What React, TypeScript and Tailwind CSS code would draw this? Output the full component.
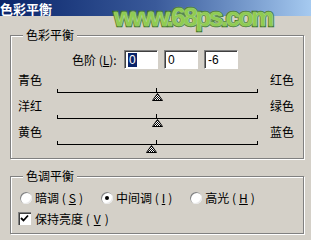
import React from "react";

const CJK = "font-['Noto_Sans_CJK_SC','Noto_Sans',sans-serif]";

// slider thumb: hatched triangle
function Thumb() {
  return (
    <svg width="11" height="8" viewBox="0 0 11 8">
      <defs>
        <pattern id="hatch" width="2" height="2" patternUnits="userSpaceOnUse">
          <rect width="2" height="2" fill="#ffffff" />
          <rect width="1" height="1" fill="#000000" />
          <rect x="1" y="1" width="1" height="1" fill="#000000" />
        </pattern>
      </defs>
      <polygon points="5.5,0.5 10.5,7.5 0.5,7.5" fill="url(#hatch)" stroke="#000" strokeWidth="1" />
    </svg>
  );
}

function SliderRow({ left, right, value }: { left: string; right: string; value: number }) {
  // value in -100..100, track is 200px wide
  const x = 100 + value;
  return (
    <div>
      <div className="flex h-[14px] items-center justify-between pl-[7px] pr-[9px] text-[12px] leading-none text-black">
        <span>{left}</span>
        <span>{right}</span>
      </div>
      <div className="relative ml-[46px] h-[12px] w-[201px]">
        <div className="absolute left-0 top-[5px] h-px w-full bg-black" />
        <div className="absolute left-0 top-[2px] h-[4px] w-px bg-black" />
        <div className="absolute right-0 top-[2px] h-[4px] w-px bg-black" />
        <div className="absolute left-[99px] top-[1px] h-[5px] w-px bg-black" />
        <div className="absolute top-[6px]" style={{ left: x - 5 }}>
          <Thumb />
        </div>
      </div>
    </div>
  );
}

function Field({ value, selected }: { value: string; selected?: boolean }) {
  return (
    <div className="h-[19px] w-[34px] border border-b-white border-l-[#808080] border-r-white border-t-[#808080] bg-white shadow-[inset_1px_1px_0_#404040] pl-[3px] pt-[2px] text-[12px] leading-[14px] text-black font-['Liberation_Sans',sans-serif]">
      {selected ? <span className="bg-[#0a246a] px-px text-white outline outline-1 outline-white">{value}</span> : value}
    </div>
  );
}

function Radio({ on }: { on?: boolean }) {
  return (
    <span className="flex h-[12px] w-[12px] items-center justify-center rounded-full bg-white shadow-[inset_1px_1px_0_#808080,inset_-1px_-1px_0_#e8e8e8]">
      {on && <span className="h-[4px] w-[4px] rounded-full bg-black" />}
    </span>
  );
}

function Group({ title, children, className }: { title: string; children: React.ReactNode; className: string }) {
  return (
    <div className={`relative ml-[10px] w-[294px] border border-[#808080] shadow-[inset_1px_1px_0_#fff,1px_1px_0_#fff] ${className}`}>
      <span className="absolute left-[12px] top-[-8px] bg-[#d4d0c8] px-[3px] text-[12px] leading-[14px] text-black">
        {title}
      </span>
      {children}
    </div>
  );
}

export default function App() {
  return (
    <div className={`relative h-[240px] w-[311px] overflow-hidden bg-[#d4d0c8] ${CJK}`}>
      <div className="flex h-[16px] items-center bg-gradient-to-r from-[#0a246a] via-[#3a5a9a] to-[#a6caf0]">
        <span className="text-[13px] font-bold leading-none text-white">色彩平衡</span>
      </div>

      <Group title="色彩平衡" className="mt-[19px] h-[124px] pt-[14px]">
        <div className="flex items-center">
          <span className="ml-[61px] w-[52px] text-[12px] leading-none text-black">
            色阶 (<u>L</u>):
          </span>
          <div className="flex gap-[6px]">
            <Field value="0" selected />
            <Field value="0" />
            <Field value="-6" />
          </div>
        </div>
        <div className="mt-[4px]">
          <SliderRow left="青色" right="红色" value={0} />
          <SliderRow left="洋红" right="绿色" value={0} />
          <SliderRow left="黄色" right="蓝色" value={-6} />
        </div>
      </Group>

      <Group title="色调平衡" className="mt-[17px] h-[58px] pt-[15px]">
        <div className="flex items-center text-[12px] leading-none text-black">
          <span className="ml-[9px] flex items-center gap-[3px]">
            <Radio /> 暗调 (<u>S</u>)
          </span>
          <span className="ml-[18px] flex items-center gap-[3px]">
            <Radio on /> 中间调 (<u>I</u>)
          </span>
          <span className="ml-[18px] flex items-center gap-[3px]">
            <Radio /> 高光 (<u>H</u>)
          </span>
        </div>
        <div className="ml-[7px] mt-[8px] flex items-center gap-[4px] text-[12px] leading-none text-black">
          <span className="flex h-[13px] w-[13px] items-center justify-center bg-white shadow-[inset_1px_1px_0_#808080,inset_2px_2px_0_#404040,inset_-1px_-1px_0_#fff]">
            <svg width="9" height="9" viewBox="0 0 9 9">
              <path d="M1 4 L3.5 6.5 L8 1.5" fill="none" stroke="#000" strokeWidth="1.8" />
            </svg>
          </span>
          保持亮度 (<u>V</u>)
        </div>
      </Group>

      <div className="absolute left-[114px] top-[4px] text-[26px] font-bold leading-none tracking-[-2.4px] text-[#8fcc52] font-['Liberation_Sans',sans-serif] [-webkit-text-stroke:2.5px_#2f6e12] [paint-order:stroke_fill] [text-shadow:0_0_2px_#ffffff]">
        www.68ps.com
      </div>
    </div>
  );
}
